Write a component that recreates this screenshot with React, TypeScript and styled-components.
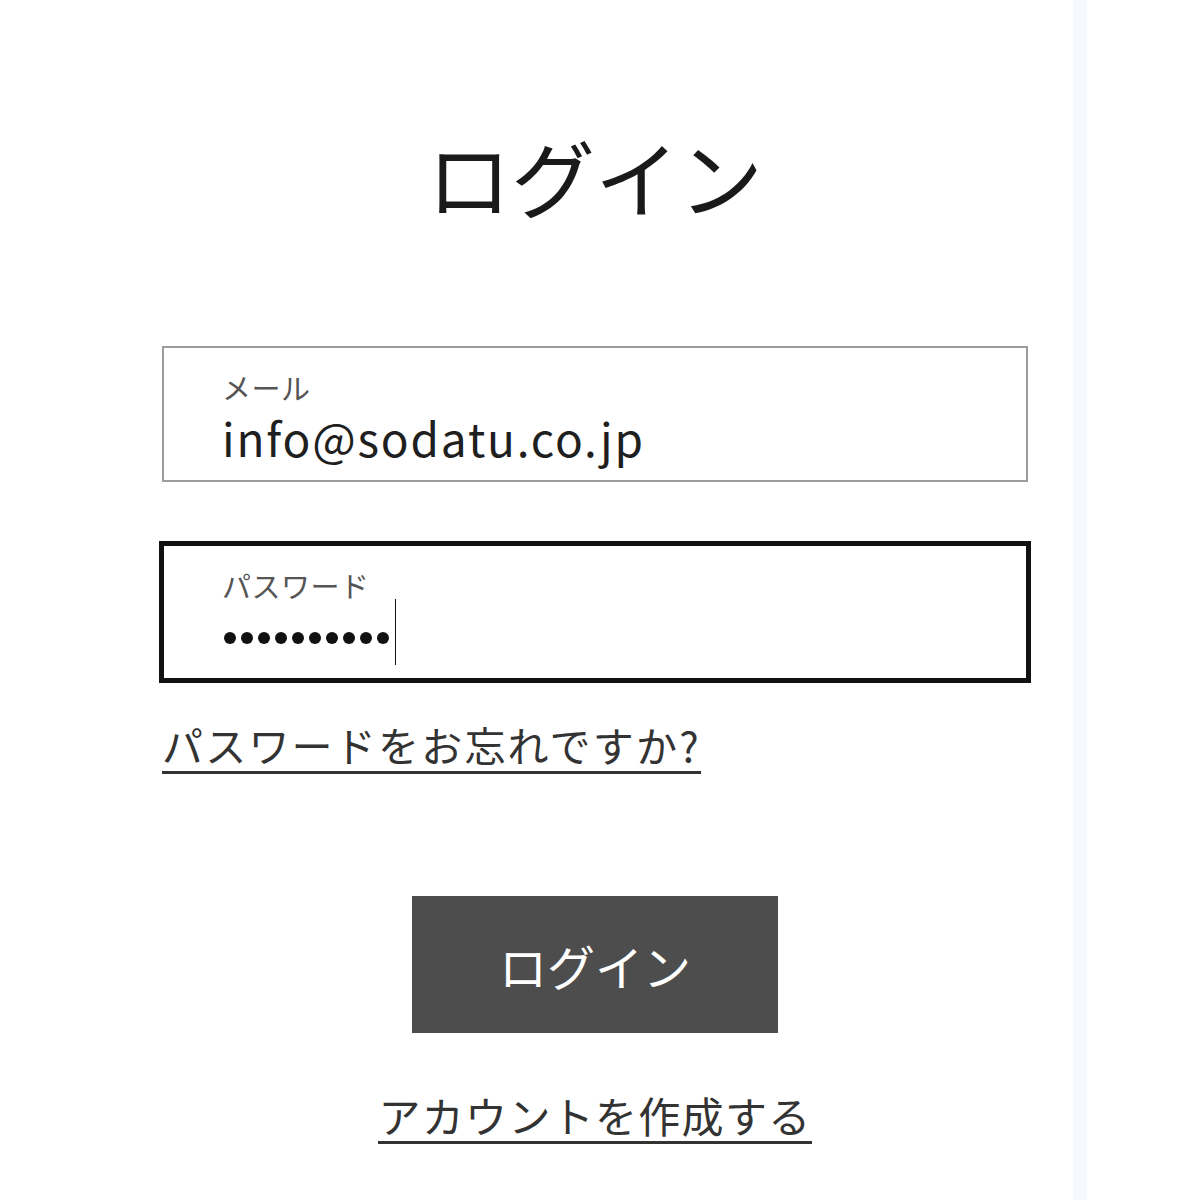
import React from "react";
import styled, { createGlobalStyle } from "styled-components";

const GlobalStyle = createGlobalStyle`
	html, body {
		margin: 0;
		padding: 0;
		background: #ffffff;
	}
	body {
		font-family: "Noto Sans CJK JP", "Noto Sans", sans-serif;
		color: #222;
	}
`;

const Page = styled.div`
	display: flex;
	width: 1200px;
	height: 1200px;
	overflow: hidden;
`;

const Main = styled.main`
	width: 1073px;
	flex: none;
`;

const Strip = styled.div`
	width: 14px;
	flex: none;
	background: #f7f8fe;
`;

const Rest = styled.div`
	flex: 1;
	background: #ffffff;
`;

const Column = styled.div`
	width: 866px;
	margin-left: 162px;
	padding-top: 134px;
	display: flex;
	flex-direction: column;
`;

const Title = styled.h1`
	margin: 0 0 128px;
	text-align: center;
	font-size: 84px;
	font-weight: 400;
	line-height: 1;
	color: #1a1a1a;
`;

const Field = styled.div<{ $focused?: boolean }>`
	box-sizing: border-box;
	height: 136px;
	padding: 21px 0 0 58px;
	border: 2px solid ${({ $focused }) => ($focused ? "#111" : "#9c9c9c")};
	outline: ${({ $focused }) => ($focused ? "3px solid #111" : "none")};
	display: flex;
	flex-direction: column;
	& + & {
		margin-top: 62px;
	}
`;

const Label = styled.span`
	font-size: 29px;
	line-height: 36px;
	letter-spacing: 0.5px;
	color: #555;
`;

const Value = styled.span`
	margin-top: 7px;
	font-size: 46px;
	line-height: 50px;
	letter-spacing: 1.8px;
	color: #1f1f1f;
`;

const Mask = styled.div`
	display: flex;
	align-items: center;
	gap: 5px;
	height: 66px;
	margin-left: 2px;
	margin-top: 2px;
`;

const Dot = styled.span`
	width: 12px;
	height: 12px;
	border-radius: 50%;
	background: #111;
`;

const Caret = styled.span`
	width: 1px;
	height: 66px;
	margin-left: 1px;
	margin-top: -12px;
	background: #111;
`;

const Forgot = styled.a`
	align-self: flex-start;
	margin-top: 40px;
	padding-bottom: 3px;
	font-size: 41px;
	line-height: 48px;
	letter-spacing: 2.2px;
	color: #333;
	text-decoration: none;
	border-bottom: 3px solid #333;
`;

const Submit = styled.button`
	align-self: center;
	width: 366px;
	height: 137px;
	margin-top: 122px;
	border: none;
	background: #4d4d4d;
	color: #fff;
	font-family: "Noto Sans CJK JP", sans-serif;
	font-size: 48px;
`;

const CreateLink = styled.a`
	align-self: center;
	margin-top: 58px;
	padding-bottom: 2px;
	font-size: 42px;
	line-height: 48px;
	letter-spacing: 1.3px;
	color: #333;
	text-decoration: none;
	border-bottom: 3px solid #333;
`;

const App: React.FC = () => {
	return (
		<>
			<GlobalStyle />
			<Page>
				<Main>
					<Column>
						<Title>ログイン</Title>
						<Field>
							<Label>メール</Label>
							<Value>info@sodatu.co.jp</Value>
						</Field>
						<Field $focused>
							<Label>パスワード</Label>
							<Mask>
								{Array.from({ length: 10 }).map((_, i) => (
									<Dot key={i} />
								))}
								<Caret />
							</Mask>
						</Field>
						<Forgot href="#">パスワードをお忘れですか?</Forgot>
						<Submit type="button">ログイン</Submit>
						<CreateLink href="#">アカウントを作成する</CreateLink>
					</Column>
				</Main>
				<Strip />
				<Rest />
			</Page>
		</>
	);
};

export default App;
